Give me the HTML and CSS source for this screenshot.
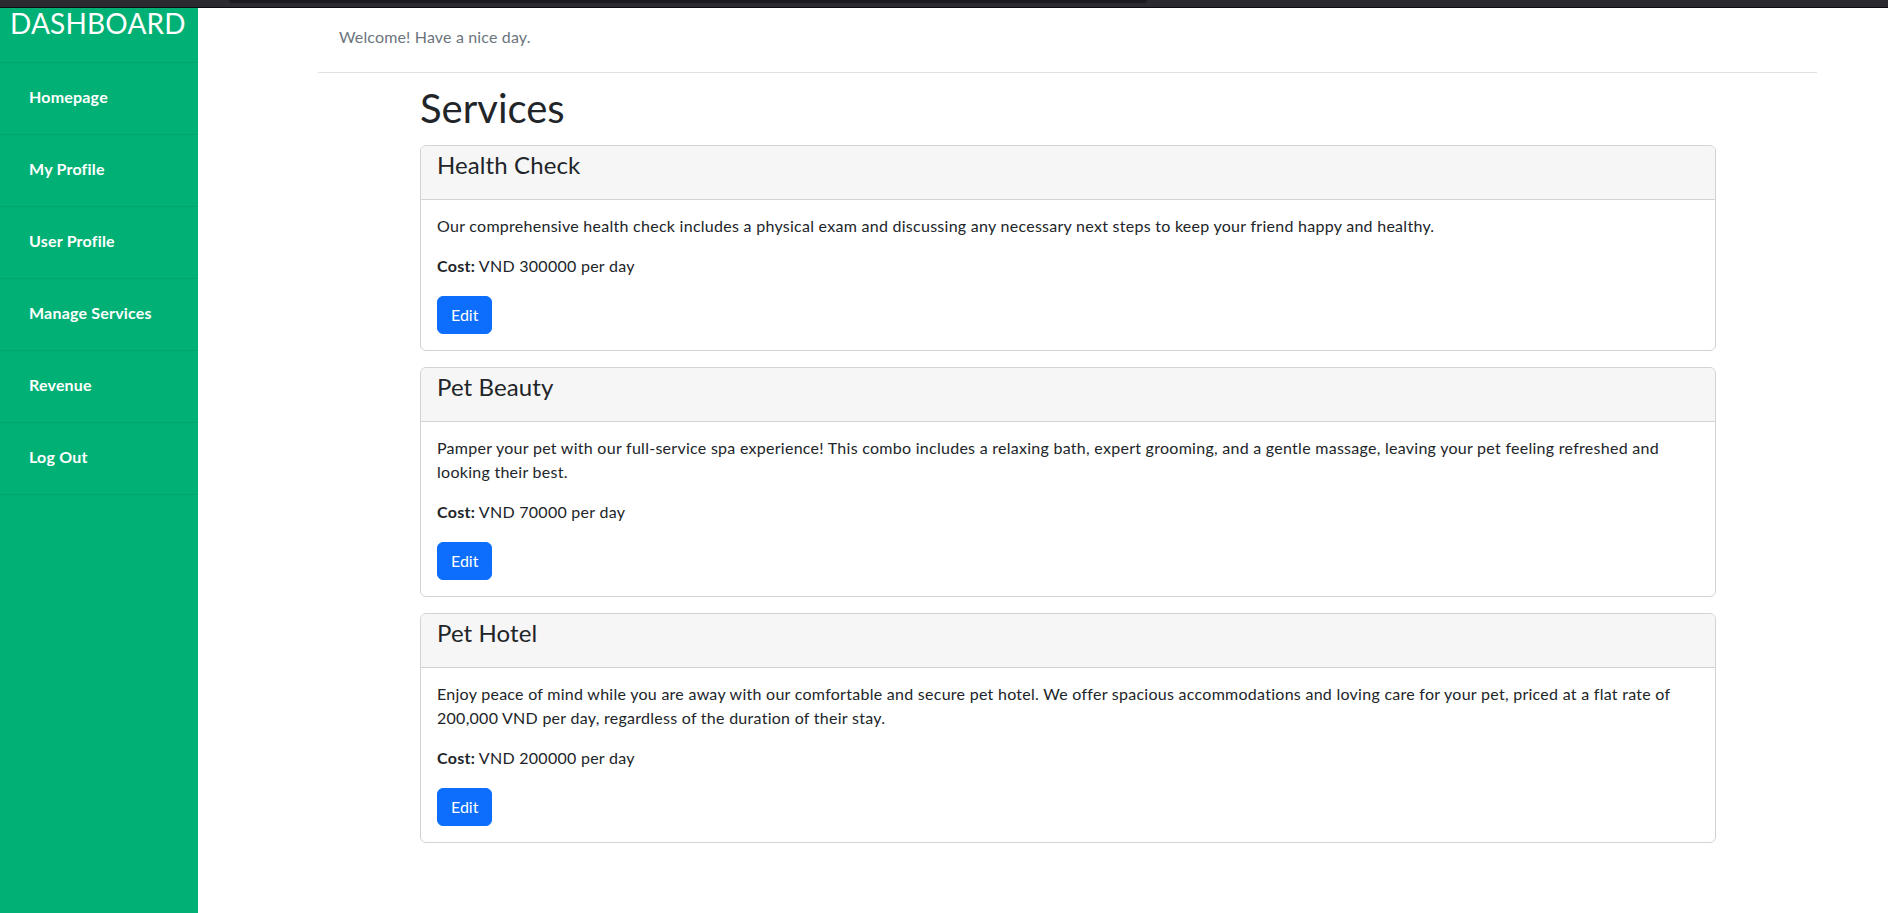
FILE: index.html
```html
<!DOCTYPE html>
<html lang="en">
<head>
<meta charset="utf-8">
<title>Dashboard - Services</title>
<link rel="stylesheet" href="styles.css">
</head>
<body>
<div class="topbar"><div class="topbar-tab"></div></div>
<div class="layout">
  <aside class="sidebar">
    <div class="brand">DASHBOARD</div>
    <nav class="nav">
      <a class="nav-item" href="#">Homepage</a>
      <a class="nav-item" href="#">My Profile</a>
      <a class="nav-item" href="#">User Profile</a>
      <a class="nav-item" href="#">Manage Services</a>
      <a class="nav-item" href="#">Revenue</a>
      <a class="nav-item" href="#">Log Out</a>
    </nav>
  </aside>
  <main class="main">
    <header class="greeting">
      <p class="greeting-text">Welcome! Have a nice day.</p>
    </header>
    <section class="content">
      <h1 class="page-title">Services</h1>

      <div class="card">
        <div class="card-header"><h4 class="card-title">Health Check</h4></div>
        <div class="card-body">
          <p class="card-text">Our comprehensive health check includes a physical exam and discussing any necessary next steps to keep your friend happy and healthy.</p>
          <p class="card-cost"><strong>Cost:</strong> VND 300000 per day</p>
          <button class="btn" type="button">Edit</button>
        </div>
      </div>

      <div class="card">
        <div class="card-header"><h4 class="card-title">Pet Beauty</h4></div>
        <div class="card-body">
          <p class="card-text">Pamper your pet with our full-service spa experience! This combo includes a relaxing bath, expert grooming, and a gentle massage, leaving your pet feeling refreshed and looking their best.</p>
          <p class="card-cost"><strong>Cost:</strong> VND 70000 per day</p>
          <button class="btn" type="button">Edit</button>
        </div>
      </div>

      <div class="card">
        <div class="card-header"><h4 class="card-title">Pet Hotel</h4></div>
        <div class="card-body">
          <p class="card-text">Enjoy peace of mind while you are away with our comfortable and secure pet hotel. We offer spacious accommodations and loving care for your pet, priced at a flat rate of 200,000 VND per day, regardless of the duration of their stay.</p>
          <p class="card-cost"><strong>Cost:</strong> VND 200000 per day</p>
          <button class="btn" type="button">Edit</button>
        </div>
      </div>
    </section>
  </main>
</div>
</body>
</html>
```

FILE: styles.css
```css
* { box-sizing: border-box; }

html, body {
  margin: 0;
  padding: 0;
  height: 100%;
}

body {
  font-family: "Lato", "Noto Sans", sans-serif;
  font-size: 16px;
  line-height: 1.5;
  color: #212529;
  background: #ffffff;
  overflow: hidden;
}

.topbar {
  height: 8px;
  background: #2b2a33;
  border-bottom: 1px solid #0e0e11;
  padding-left: 229px;
}

.topbar-tab {
  width: 918px;
  height: 3px;
  background: #1c1b22;
  border-radius: 0 0 3px 3px;
}

.layout {
  display: flex;
  min-height: calc(100vh - 8px);
}

.sidebar {
  width: 198px;
  flex: 0 0 198px;
  background: #00b074;
  color: #ffffff;
}

.brand {
  height: 55px;
  padding: 1px 0 0 10px;
  font-size: 28px;
  line-height: 1;
  font-weight: 400;
  letter-spacing: 0.2px;
  border-bottom: 1px solid #04a36c;
}

.nav {
  display: flex;
  flex-direction: column;
}

.nav-item {
  display: block;
  height: 72px;
  padding: 22px 0 0 29px;
  color: #ffffff;
  text-decoration: none;
  font-size: 16px;
  font-weight: 700;
  line-height: 24px;
  letter-spacing: 0.2px;
  border-bottom: 1px solid #04a36c;
}

.main {
  flex: 1;
  padding: 0 71px 0 120px;
}

.greeting {
  padding: 17px 21px 23px;
  border-bottom: 1px solid #dfe1e4;
}

.greeting-text {
  margin: 0;
  color: #6c757d;
  font-size: 16px;
  line-height: 24px;
  letter-spacing: 0.15px;
}

.content {
  padding: 0 101px 0 102px;
}

.page-title {
  margin: 11px 0 13px;
  font-size: 40px;
  line-height: 48px;
  font-weight: 400;
  color: #212529;
}

.card {
  border: 1px solid #d3d3d3;
  border-radius: 6px;
  margin-bottom: 16px;
  overflow: hidden;
}

.card-header {
  background: #f6f6f6;
  border-bottom: 1px solid #d3d3d3;
  padding: 4px 16px 20px;
}

.card-title {
  margin: 0;
  font-size: 24px;
  line-height: 29px;
  font-weight: 400;
  letter-spacing: 0.1px;
  color: #212529;
}

.card-body {
  padding: 14px 16px 16px;
}

.card-text {
  margin: 0 0 16px;
  font-size: 16px;
  line-height: 24px;
  letter-spacing: 0.27px;
}

.card-cost {
  margin: 0 0 18px;
  font-size: 16px;
  line-height: 24px;
  letter-spacing: 0.27px;
}

.card-cost strong {
  font-weight: 700;
}

.btn {
  display: block;
  height: 38px;
  padding: 0 13px;
  font-family: inherit;
  font-size: 16px;
  line-height: 36px;
  color: #ffffff;
  background: #0d6efd;
  border: 1px solid #0d6efd;
  border-radius: 6px;
  cursor: pointer;
}
```
